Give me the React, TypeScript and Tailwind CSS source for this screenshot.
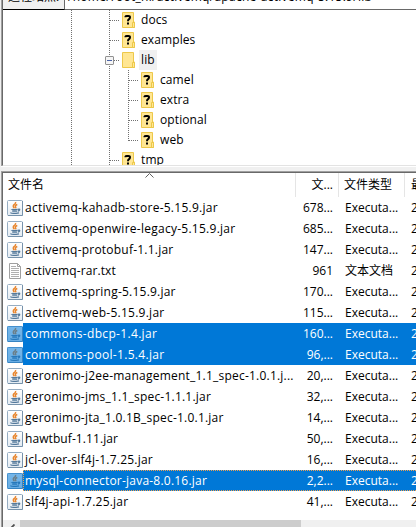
type TreeNode = { name: string; child?: boolean; open?: boolean };

const nodes: TreeNode[] = [
  { name: 'docs' },
  { name: 'examples' },
  { name: 'lib', open: true },
  { name: 'camel', child: true },
  { name: 'extra', child: true },
  { name: 'optional', child: true },
  { name: 'web', child: true },
  { name: 'tmp' },
];

type FileRow = { name: string; size: string; tracking?: string; txt?: boolean; selected?: boolean; focused?: boolean };

const files: FileRow[] = [
  { name: 'activemq-kahadb-store-5.15.9.jar', size: '678...', tracking: 'tracking-[0.26px]' },
  { name: 'activemq-openwire-legacy-5.15.9.jar', size: '685...', tracking: 'tracking-[0.26px]' },
  { name: 'activemq-protobuf-1.1.jar', size: '147...' },
  { name: 'activemq-rar.txt', size: '961', txt: true, tracking: 'tracking-[0.1px]' },
  { name: 'activemq-spring-5.15.9.jar', size: '170...' },
  { name: 'activemq-web-5.15.9.jar', size: '115...', tracking: 'tracking-[0.26px]' },
  { name: 'commons-dbcp-1.4.jar', size: '160...', selected: true, tracking: 'tracking-[0.33px]' },
  { name: 'commons-pool-1.5.4.jar', size: '96,...', selected: true, tracking: 'tracking-[0.31px]' },
  { name: 'geronimo-j2ee-management_1.1_spec-1.0.1.j...', size: '20,...' },
  { name: 'geronimo-jms_1.1_spec-1.1.1.jar', size: '32,...' },
  { name: 'geronimo-jta_1.0.1B_spec-1.0.1.jar', size: '14,...' },
  { name: 'hawtbuf-1.11.jar', size: '50,...', tracking: 'tracking-[0.08px]' },
  { name: 'jcl-over-slf4j-1.7.25.jar', size: '16,...' },
  { name: 'mysql-connector-java-8.0.16.jar', size: '2,2...', selected: true, focused: true },
  { name: 'slf4j-api-1.7.25.jar', size: '41,...' },
];

function FolderIcon({ unknown }: { unknown: boolean }) {
  return (
    <svg width="13" height="16" viewBox="0 0 13 16" className="shrink-0">
      <path d="M.5.5h11v9.5h1v5.5H.5z" fill="#ffe693" stroke="#edc84a" />
      <path d="M10.5 15.5v-5h2v5z" fill="#ffe894" stroke="#edc84a" />
      {unknown && (
        <g fill="none" stroke="#000" strokeWidth="2">
          <path d="M3.5 5.2V4.6Q3.7 3.9 5 3.9H6.4Q8 3.9 8 5.3Q8 6.6 6.8 7.3Q6 7.9 6 9.2" />
          <path d="M5 11.5h2" />
        </g>
      )}
    </svg>
  );
}

function JarIcon({ dim }: { dim?: boolean }) {
  return (
    <svg width="16" height="16" viewBox="0 0 16 16" className="shrink-0">
      <defs>
        <linearGradient id="tile" x1="0" y1="0" x2="0" y2="1">
          <stop offset="0" stopColor="#fff" />
          <stop offset="1" stopColor="#e3ebf2" />
        </linearGradient>
      </defs>
      <rect x=".5" y=".5" width="15" height="15" rx="1" fill="url(#tile)" stroke="#96adc2" />
      <path d="M1 15.5h14.5V1" fill="none" stroke="#7692ab" />
      <path d="M8.6 2Q9 3.4 7.1 4.7Q5.3 6.2 7.5 8.3M10.3 4.5Q7.7 5.4 8.5 6.8Q9.2 7.6 8.4 8.3" fill="none" stroke="#e8862e" strokeWidth="1.5" />
      <path d="M4.5 9.2Q4.3 9.8 10.7 9.3M5.2 11.2H10.2M11 9.4Q13.6 8.8 12.2 10.4L11 11.2M3.4 12.6Q5 14.2 12 12.8" fill="none" stroke="#54799b" strokeWidth="1.3" />
      {dim && <rect width="16" height="16" rx="1" fill="#0078d7" fillOpacity=".54" />}
    </svg>
  );
}

function TextIcon() {
  return (
    <svg width="16" height="16" viewBox="0 0 16 16" className="shrink-0">
      <path d="M2.5.5h8l3 3v12h-11z" fill="#fff" stroke="#a0a0a0" />
      <path d="M10.5.5v3h3" fill="none" stroke="#a0a0a0" />
      <path d="M4 3.5h5M4 5.5h8M4 7.5h8M4 9.5h8M4 11.5h8M4 13.5h8" stroke="#b0b0b0" />
    </svg>
  );
}

const dotsX = 'h-px bg-[repeating-linear-gradient(to_right,#707070_0_1px,transparent_1px_2px)]';
const dotsY = 'w-px bg-[repeating-linear-gradient(to_bottom,#707070_0_1px,transparent_1px_2px)]';

function TreeRow({ node }: { node: TreeNode }) {
  return (
    <div className={`relative flex h-5 items-center ${node.child ? 'pl-[126px]' : 'pl-[107px]'}`}>
      <span className={`${dotsX} w-2.5 shrink-0`} />
      <span className="w-0.5 shrink-0" />
      <FolderIcon unknown={!node.open} />
      <span className={`ml-1 flex h-5 items-center px-0.5 tracking-[0.1px] ${node.open ? 'bg-[#f0f0f0]' : ''}`}>{node.name}</span>
      {node.open && (
        <svg width="9" height="9" viewBox="0 0 9 9" className="absolute left-[102px] top-1.5">
          <rect x=".5" y=".5" width="8" height="8" rx=".5" fill="#f5f5f5" stroke="#919191" />
          <path d="M2 4.5h5" stroke="#4b63a7" />
        </svg>
      )}
    </div>
  );
}

export default function App() {
  return (
    <div className="flex h-[527px] w-[416px] flex-col overflow-hidden bg-[#f0f0f0] pl-px font-['Open_Sans','Noto_Sans_CJK_SC',sans-serif] text-[12px] leading-5 whitespace-nowrap text-black">
      <div className="flex h-[166px] shrink-0 flex-col border-l border-[#a0a0a0]">
        <div className="flex h-2.5 shrink-0 items-end overflow-hidden border-l border-[#696969]">
          <div className="flex h-2.5 w-[62px] shrink-0 items-end border-r border-b border-r-[#696969] border-b-black pl-[5px]">
            <span className="mb-[2px]">远程站点:</span>
          </div>
          <div className="flex h-2.5 flex-1 items-end border-b border-[#696969] bg-white pl-[3px]">
            <span className="mb-[2px] tracking-[0.27px]">/home/root_hl/activemq/apache-activemq-5.15.9/lib</span>
          </div>
        </div>
        <div className="relative h-[156px] overflow-hidden border-b border-l border-b-[#e3e3e3] border-l-[#696969] bg-white">
          <span className={`${dotsY} absolute top-0 left-[68px] h-[155px]`} />
          <span className={`${dotsY} absolute top-0 left-[106px] h-[155px]`} />
          <span className={`${dotsY} absolute top-[60px] left-[125px] h-[71px]`} />
          {nodes.map((n) => (
            <TreeRow key={n.name} node={n} />
          ))}
        </div>
      </div>
      <div className="h-px shrink-0 bg-white" />
      <div className="h-1 shrink-0" />
      <div className="flex flex-1 flex-col border-t border-l border-[#a0a0a0]">
        <div className="flex flex-1 flex-col border-t border-l border-[#696969] bg-white">
          <div className="relative flex h-6 shrink-0 items-center overflow-hidden">
            <span className="w-[293px] shrink-0 border-r border-[#e5e5e5] pl-[5px] leading-6">文件名</span>
            <span className="w-[43px] shrink-0 border-r border-[#e5e5e5] pr-[5px] text-right leading-6">文...</span>
            <span className="w-[66px] shrink-0 border-r border-[#e5e5e5] pl-[5px] leading-6">文件类型</span>
            <span className="shrink-0 pl-1.5 leading-6">最近修改</span>
            <svg width="9" height="5" viewBox="0 0 9 5" className="absolute left-[142px] top-0">
              <path d="M.5 4.5l4-4 4 4" fill="none" stroke="#606060" />
            </svg>
          </div>
          {files.map((f) => (
            <div key={f.name} className="flex h-[21px] shrink-0 items-center pl-1">
              {f.txt ? <TextIcon /> : <JarIcon dim={f.selected} />}
              <div
                className={`flex h-[21px] flex-1 items-center ${f.selected ? 'bg-[#0078d7] text-white' : ''} ${f.focused ? 'border-y border-l border-dotted border-[#f0a050]' : ''}`}
              >
                <span className={`shrink-0 ${f.focused ? 'w-[271px] pl-px' : 'w-[272px] pl-0.5'} ${f.tracking ?? 'tracking-[0.22px]'}`}>{f.name}</span>
                <span className="w-[38px] shrink-0 text-right">{f.size}</span>
                <span className="w-[66px] shrink-0 pl-3">{f.txt ? '文本文档' : 'Executa...'}</span>
                <span className="w-[17px] shrink-0 overflow-hidden pl-3">2</span>
              </div>
            </div>
          ))}
          <div className="mt-2 flex h-[7px] shrink-0 overflow-hidden bg-[#f0f0f0]">
            <div className="w-[17px] pl-1.5">
              <svg width="6" height="10" viewBox="0 0 6 10" className="mt-1">
                <path d="M5.5 .5L1.5 4.5l4 4" fill="none" stroke="#505050" strokeWidth="1.8" />
              </svg>
            </div>
            <div className="w-[281px] bg-[#cdcdcd]" />
          </div>
        </div>
      </div>
    </div>
  );
}
